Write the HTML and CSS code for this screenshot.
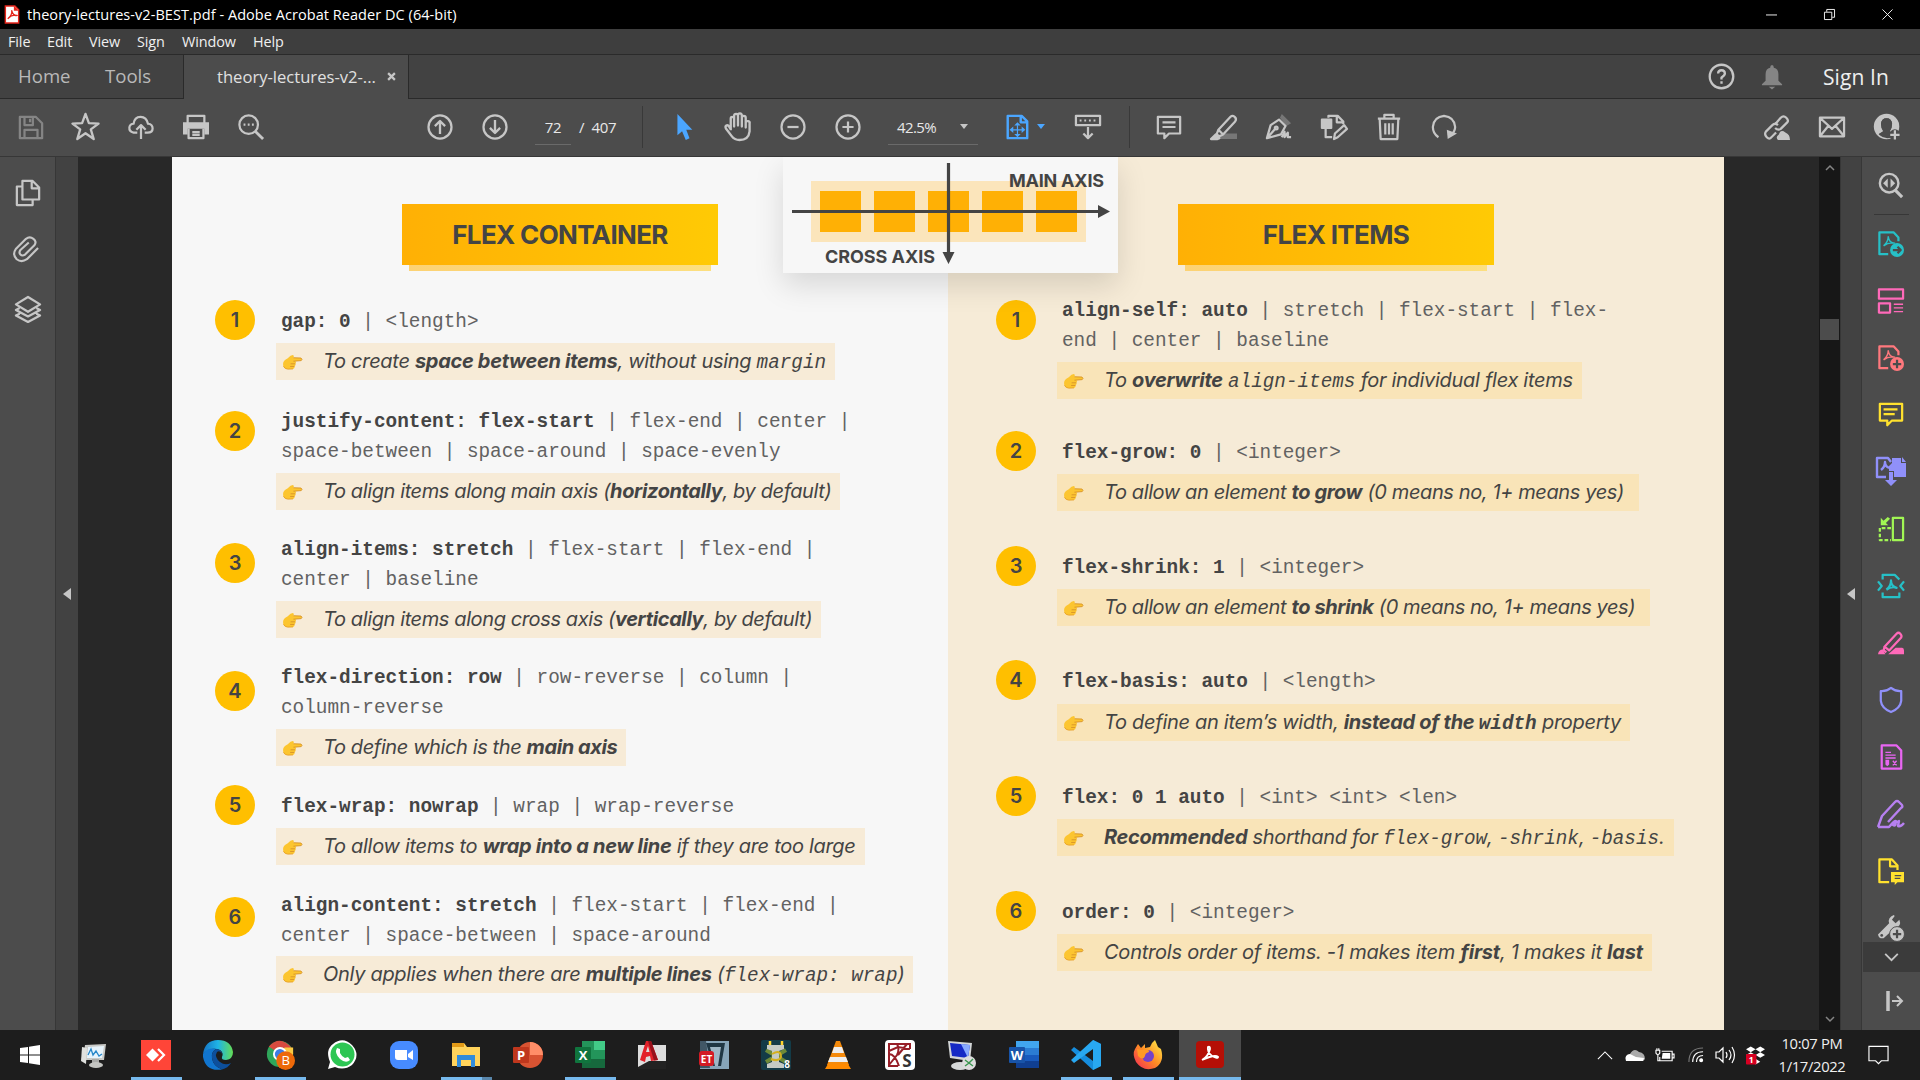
FILE: index.html
```html
<!DOCTYPE html>
<html lang="en">
<head>
<meta charset="utf-8">
<title>theory-lectures-v2-BEST.pdf - Adobe Acrobat Reader DC (64-bit)</title>
<link rel="stylesheet" href="styles.css">
</head>
<body>
<svg class="defs" width="0" height="0">
<defs>
<symbol id="hand-point" viewBox="0 0 22 18"><path d="M6 4.500Q9 1 11.500 1Q13.200 1.500 12 4L20 4.300Q22 5.600 20.200 7L14 7.600Q15.600 9 14 10.400Q15 12 13.200 13Q13.700 15.200 11.600 15.800L5 16Q1 15 1 10.500Q1 7 6 4.500Z" fill="#fcc52f"/><path d="M12 4L20 4.300Q22 5.600 20.200 7L12 7.600M9 10.400H14M8.500 13.200H13" fill="none" stroke="#d99528" stroke-width="1"/><path d="M1.500 13Q3 16 6 16L11.500 15.800" fill="none" stroke="#e8a12b" stroke-width="1"/></symbol>
</defs>
</svg>

<header class="titlebar">
  <svg class="app-icon" viewBox="0 0 16 20"><path d="M1 1H11L15 5V19H1Z" fill="#fff" stroke="#e5251b" stroke-width="1.500"/><path d="M10 1V6H15" fill="#e5251b"/><path d="M3.500 14.500C7 12 8.500 8 7.500 5.500C9 10 11 12 13 11C9 10 6 12 3.500 14.500Z" stroke="#e5251b" stroke-width="1.300" fill="none"/></svg>
  <span class="window-title">theory-lectures-v2-BEST.pdf - Adobe Acrobat Reader DC (64-bit)</span>
  <svg class="winbtn" viewBox="0 0 12 12"><path d="M0 6.500H12"/></svg>
  <svg class="winbtn" viewBox="0 0 12 12"><path d="M.5 3.500H8.500V11.500H.5ZM3 3V.5H11.500V9H9"/></svg>
  <svg class="winbtn" viewBox="0 0 12 12"><path d="M.5 .5L11.500 11.500M11.500 .5L.5 11.500"/></svg>
</header>
<nav class="menubar"><span class="m-file">File</span><span class="m-edit">Edit</span><span class="m-view">View</span><span class="m-sign">Sign</span><span class="m-window">Window</span><span>Help</span></nav>
<div class="tabbar">
  <div class="tab-main"><span class="t-home">Home</span><span>Tools</span></div>
  <div class="tab-doc"><span>theory-lectures-v2-...</span><svg viewBox="0 0 8 8"><path d="M1 1L7 7M7 1L1 7"/></svg></div>
  <div class="tab-rest">
    <svg class="ic help" viewBox="0 0 28 28"><circle cx="14" cy="14" r="12.200"/><path d="M10.500 11Q10.500 7.500 14 7.500T17.500 11Q17.500 13 14 15V17M14 19V21.500" stroke-width="2.400"/></svg>
    <svg class="bell" viewBox="0 0 24 28"><path d="M12 1Q14 1 14 4Q19 5 19 11V18L23 22V23H1V22L5 18V11Q5 5 10 4Q10 1 12 1ZM8.500 24.500H15.500L12 27.500Z" fill="#858585"/></svg>
    <span>Sign In</span>
  </div>
</div>
<div class="toolbar">
  <div class="group g1">
    <i><svg class="ic dim" viewBox="0 0 28 28"><path d="M2 3H19L26 10V26H2ZM7 3V12H16V3M13 5V9M7 26V17H21V26"/></svg></i>
    <i><svg class="ic big" viewBox="0 0 30 30"><path d="M15 2L18.500 11.500L28.500 12L20.500 18L23.500 28L15 22L6.500 28L9.500 18L1.500 12L11.500 11.500Z"/></svg></i>
    <i><svg class="ic" viewBox="0 0 28 28"><path d="M10 20H6Q1 19 1.500 14.500Q2 10.500 6 10.500Q7 3 13.500 3Q20 3 21.500 10.500Q26.500 11 26.500 15.500Q26.500 20 21 20H18M14 27V12M9 17L14 12L19 17"/></svg></i>
    <i><svg class="ic" viewBox="0 0 28 28"><path d="M5 10V2H23V10"/><path d="M0 9H28V22H23V16H5V22H0Z" fill="currentColor" stroke="none"/><path d="M6 16V26H22V16M10 19.500H18M10 22.500H18"/></svg></i>
    <i><svg class="ic" viewBox="0 0 28 28"><circle cx="11.500" cy="11.500" r="10"/><path d="M18.500 18.500L27 27" stroke-width="3"/><path d="M6 11.500H8M10.500 11.500H12.500M15 11.500H17"/></svg></i>
  </div>
  <div class="group g2">
    <i><svg class="ic" viewBox="0 0 28 28"><circle cx="14" cy="14" r="12.400"/><path d="M14 21.500V7.500M8.500 13L14 7.500L19.500 13" stroke-width="2.500"/></svg></i>
    <i><svg class="ic" viewBox="0 0 28 28"><circle cx="14" cy="14" r="12.400"/><path d="M14 6.500V20.500M8.500 15L14 20.500L19.500 15" stroke-width="2.500"/></svg></i>
  </div>
  <span class="page-now">72</span><span class="page-all">/&nbsp; 407</span>
  <div class="group g3">
    <i class="c-cursor"><svg class="ic" viewBox="0 0 28 28"><path d="M8 0L24 17L17.500 17L21 26L17 28L13 18.500L8 23Z" fill="#4ba6ff" stroke="none"/></svg></i>
    <i><svg class="ic big" viewBox="0 0 30 30"><path d="M8 19V7Q8 5 9.500 5T11.500 7V15V4Q11.500 2 13.500 2T15.500 4V14V3Q15.500 1.500 17.500 1.500T19.500 4V15V6Q19.500 4 21.500 4T23.500 6V16V11Q24 9 26 9.500T27.500 12V20Q26.500 29 17 29Q12 29 9 25L3 17Q2 15 3.500 14T6.500 15.500L8 18"/></svg></i>
    <i><svg class="ic" viewBox="0 0 28 28"><circle cx="14" cy="14" r="12.400"/><path d="M8 14H20"/></svg></i>
    <i><svg class="ic" viewBox="0 0 28 28"><circle cx="14" cy="14" r="12.400"/><path d="M8 14H20M14 8V20"/></svg></i>
  </div>
  <div class="zoom-box"><span>42.5%</span><svg viewBox="0 0 10 6"><path d="M0 0H10L5 6Z"/></svg></div>
  <div class="fit"><svg class="ic" viewBox="0 0 28 28"><path d="M4 2H19L25 8V26H4ZM18 2V9H25" stroke-width="2.600"/><path d="M14.500 9L18 12.500H11ZM14.500 25L18 21.500H11ZM6 17L10 13.500V20.500ZM23 17L19 13.500V20.500Z" fill="currentColor" stroke="none"/><path d="M14.500 12V22M9 17H20" stroke-width="1.300"/></svg><svg class="caret" viewBox="0 0 10 6"><path d="M0 0H10L5 6Z"/></svg></div>
  <i class="scroll-mode"><svg class="ic" viewBox="0 0 28 28"><path d="M1 2H27V12H1ZM14 14V26M9 21L14 26L19 21"/><path d="M5 7H7M10 7H12M15 7H17M20 7H22"/></svg></i>
  <div class="group g4">
    <i><svg class="ic" viewBox="0 0 28 28"><path d="M2 3H26V21H14L9 26V21H2ZM7 9H21M7 14H21"/></svg></i>
    <i><svg class="ic" viewBox="0 0 28 28"><path d="M13 21H28V27H6Z" fill="#777" stroke="none"/><path d="M8 17L21 3Q23 1 25.500 3T26 8L13 22ZM8 17L6 22L9 24L13 22"/><path d="M0 27L5 22L9 26L7 27Z" fill="currentColor"/></svg></i>
    <i><svg class="ic" viewBox="0 0 28 28"><path d="M15 4L17 0L27 10L22 13Z" fill="#777" stroke="none"/><path d="M1 26L5 12L14 6L21 13L16 22ZM1 26L10 16"/><circle cx="11" cy="15" r="1.500"/><path d="M17 25L20 19V25L23.500 20V25H27"/></svg></i>
    <i><svg class="ic" viewBox="0 0 28 28"><path d="M8 4V2H18L24 8V11M17 2V9H24M5 16V25H12"/><path d="M1 6H11V15H1Z" fill="currentColor"/><path d="M14 27L15 21L25 12L28 16L18 25Z"/></svg></i>
    <i><svg class="ic" viewBox="0 0 28 28"><path d="M2 5H26M9 5V1H19V5M4 6L5 27H23L24 6M10 10V22M14 10V22M18 10V22"/></svg></i>
    <i><svg class="ic" viewBox="0 0 28 28"><path d="M8 25Q2 21 2 14Q3 3 14 2Q25 3 26 14Q26 18 22 23"/><path d="M28 21L18 27L17 17Z" fill="currentColor" stroke="none"/></svg></i>
  </div>
  <div class="group g5">
    <i><svg class="ic" viewBox="0 0 28 28"><path d="M12 11L18 4Q21 1 24 4T25 9L18 16Q15 18 12 15M15 12Q12 9 9 12L2 19Q0 22 3 25T8 25L13 20"/><path d="M15 28Q12 25 16 22Q18 16 23 20Q28 22 28 28Z" fill="currentColor" stroke="none"/></svg></i>
    <i><svg class="ic" viewBox="0 0 28 28"><path d="M1 4H27V24H1ZM1 4L14 16L27 4M1 24L10 13M27 24L18 13"/></svg></i>
    <i><svg class="ic" viewBox="0 0 28 28"><circle cx="13.500" cy="13.500" r="12.500"/><path d="M4 22L10 18.500Q7.500 15 7.500 10.500Q8 4.500 13.500 4.500T19.500 10.500Q19.500 15 17 18.500L19 20V26H22L27 14Q26 1 13.500 1Q1 2 1 14Q1 18 4 22Z" fill="currentColor" stroke="none"/><path d="M10 18.500Q7.500 15 7.500 10.500Q8 4.500 13.500 4.500T19.500 10.500Q19.500 15 17 18.500L19 20V25Q12 28 5 22Z" fill="#4c4c4c" stroke="none"/><circle cx="22.500" cy="22.500" r="6" fill="#4c4c4c" stroke="none"/><path d="M22.500 17.500V27.500M17.500 22.500H27.500" stroke-width="2.400"/></svg></i>
  </div>
</div>

<main class="workspace">
  <aside class="leftrail">
    <svg class="ic" viewBox="0 0 28 28"><path d="M8 1H19L26 8V21H8ZM18 1V9H26M8 7H2V27H19V22"/></svg>
    <svg class="ic clip" viewBox="0 0 28 28"><path d="M27 13L15 25Q9 29 4 25Q-1 20 3 14L14 3Q18 0 22 3T23 10L13 20Q10 22 8 20T8 15L17 7" stroke-width="2.300"/></svg>
    <svg class="ic" viewBox="0 0 28 28"><path d="M14 1L27 9L14 17L1 9ZM5 13L1 15L14 22L27 15L23 13M5 19L1 21L14 28L27 21L23 19"/></svg>
  </aside>
  <div class="gutter"><svg viewBox="0 0 8 12"><path d="M8 0V12L0 6Z"/></svg></div>
  <div class="canvas">
    <article class="page">
      <section class="half container">
        <h1>FLEX CONTAINER</h1>
        <ol>
          <li><b class="num">1</b><code><b>gap: 0</b> | &lt;length&gt;</code><p class="loose"><svg><use href="#hand-point"/></svg>To create <b>space between items</b>, without using <tt>margin</tt></p></li>
          <li class="two"><b class="num up">2</b><code><b>justify-content: flex-start</b> | flex-end | center |<br>space-between | space-around | space-evenly</code><p><svg><use href="#hand-point"/></svg>To align items along main axis (<b>horizontally</b>, by default)</p></li>
          <li class="two"><b class="num">3</b><code><b>align-items: stretch</b> | flex-start | flex-end |<br>center | baseline</code><p><svg><use href="#hand-point"/></svg>To align items along cross axis (<b>vertically</b>, by default)</p></li>
          <li class="two"><b class="num">4</b><code><b>flex-direction: row</b> | row-reverse | column |<br>column-reverse</code><p><svg><use href="#hand-point"/></svg>To define which is the <b>main axis</b></p></li>
          <li><b class="num">5</b><code><b>flex-wrap: nowrap</b> | wrap | wrap-reverse</code><p class="loose"><svg><use href="#hand-point"/></svg>To allow items to <b>wrap into a new line</b> if they are too large</p></li>
          <li><b class="num slight">6</b><code><b>align-content: stretch</b> | flex-start | flex-end |<br>center | space-between | space-around</code><p class="loose"><svg><use href="#hand-point"/></svg>Only applies when there are <b>multiple lines</b> (<tt>flex-wrap: wrap</tt>)</p></li>
        </ol>
      </section>
      <section class="half items">
        <h1>FLEX ITEMS</h1>
        <ol>
          <li class="two"><b class="num up">1</b><code><b>align-self: auto</b> | stretch | flex-start | flex-<br>end | center | baseline</code><p class="loose"><svg><use href="#hand-point"/></svg>To <b>overwrite</b> <tt>align-items</tt> for individual flex items</p></li>
          <li><b class="num">2</b><code><b>flex-grow: 0</b> | &lt;integer&gt;</code><p class="roomy"><svg><use href="#hand-point"/></svg>To allow an element <b>to grow</b> (0 means no, 1+ means yes)</p></li>
          <li><b class="num">3</b><code><b>flex-shrink: 1</b> | &lt;integer&gt;</code><p class="roomy"><svg><use href="#hand-point"/></svg>To allow an element <b>to shrink</b> (0 means no, 1+ means yes)</p></li>
          <li class="two"><b class="num">4</b><code><b>flex-basis: auto</b> | &lt;length&gt;</code><p class="loose"><svg><use href="#hand-point"/></svg>To define an item’s width, <b>instead of the <tt>width</tt></b> property</p></li>
          <li><b class="num">5</b><code><b>flex: 0 1 auto</b> | &lt;int&gt; &lt;int&gt; &lt;len&gt;</code><p class="loose"><svg><use href="#hand-point"/></svg><b>Recommended</b> shorthand for <tt>flex-grow</tt>, <tt>-shrink</tt>, <tt>-basis</tt>.</p></li>
          <li><b class="num">6</b><code><b>order: 0</b> | &lt;integer&gt;</code><p class="looser"><svg><use href="#hand-point"/></svg>Controls order of items. -1 makes item <b>first</b>, 1 makes it <b>last</b></p></li>
        </ol>
      </section>
      <figure class="axes">
        <svg viewBox="0 0 335 116" width="335" height="116">
          <rect x="28" y="24" width="275" height="61" fill="#fbe5bb"/>
          <g fill="#ffb005"><rect x="37" y="34" width="41" height="41"/><rect x="91" y="34" width="41" height="41"/><rect x="145" y="34" width="41" height="41"/><rect x="199" y="34" width="41" height="41"/><rect x="253" y="34" width="41" height="41"/></g>
          <path d="M9 54.500H316M165.500 6V96" stroke="#444" stroke-width="3.200"/>
          <path d="M315 48V61L327 54.500ZM159.500 95H171.500L165.500 107Z" fill="#444"/>
          <text x="226" y="30" textLength="95">MAIN AXIS</text>
          <text x="42" y="106" textLength="110">CROSS AXIS</text>
        </svg>
      </figure>
    </article>
  </div>
  <div class="scrollbar">
    <svg viewBox="0 0 10 6"><path d="M1 5L5 1L9 5"/></svg>
    <div class="thumb"></div>
    <svg viewBox="0 0 10 6"><path d="M1 1L5 5L9 1"/></svg>
  </div>
  <div class="gutter right"><svg viewBox="0 0 8 12"><path d="M8 0V12L0 6Z"/></svg></div>
  <aside class="rightrail">
    <i class="first"><svg class="ic" viewBox="0 0 28 28"><circle cx="12" cy="12" r="10" stroke-width="2.600"/><path d="M18 19L26 27" stroke-width="3.400"/><path d="M10.500 7V17L5.500 12ZM13.500 7V17L18.500 12Z" fill="currentColor" stroke="none"/></svg></i>
    <i class="teal"><svg class="ic" viewBox="0 0 28 28"><path d="M11 25H1.500V1.500H17L22 7V11" /><path d="M6 16Q11 12 11 6Q12 13 18 13Q11 12 6 16" stroke-width="1.500"/><circle cx="20.500" cy="20.500" r="7.500" fill="currentColor" stroke="none"/><path d="M16 20.500H24M21 17L24.500 20.500L21 24" stroke="#4c4c4c"/></svg></i>
    <i class="pink"><svg class="ic" viewBox="0 0 28 28"><path d="M1 1.500H27V11.500H1ZM1 16.500H13V26.500H1Z"/><path d="M17 17.500H27M17 21.500H27M17 25.500H27" stroke-width="1.400"/></svg></i>
    <i class="coral"><svg class="ic" viewBox="0 0 28 28"><path d="M11 25H1.500V1.500H17L22 7V11" /><path d="M6 16Q11 12 11 6Q12 13 18 13Q11 12 6 16" stroke-width="1.500"/><circle cx="20.500" cy="20.500" r="7.500" fill="currentColor" stroke="none"/><path d="M16 20.500H25M20.500 16V25" stroke="#4c4c4c"/></svg></i>
    <i class="yellow"><svg class="ic" viewBox="0 0 28 28"><path d="M2 2H26V20H15L10 25V20H2ZM6 8H21M6 13H18"/></svg></i>
    <i class="violet"><svg class="ic wide" viewBox="0 0 30 30"><path d="M10 20H1V1H12L15 5M5 13Q9 10 9 5Q9 10 14 11"/><path d="M16 1H25V6H30V20H18V14H13V9L16 6ZM26 0L30 5H26ZM13 15H17V23H21L15 29L9 23H13Z" fill="currentColor" stroke="none"/></svg></i>
    <i class="green"><svg class="ic" viewBox="0 0 28 28"><path d="M16 2H27V26H16Z"/><path d="M14 13H2V26H14" stroke-dasharray="4 2"/><path d="M3 2V10H11L8.500 7.500L13 3L10.500 1L6 5Z" fill="currentColor" stroke="none"/></svg></i>
    <i class="teal"><svg class="ic" viewBox="0 0 28 28"><path d="M5 7V2H18L23 7M5 21V26H23V21M0 9L4 14L0 19M28 9L24 14L28 19M9 18Q14 14 14 8Q14 14 20 16Q15 14 9 18"/></svg></i>
    <i class="pink"><svg class="ic" viewBox="0 0 28 28"><path d="M7 18L20 4Q22 2 24 4T25 8L12 22ZM7 18L6 22L9 24"/><path d="M0 26Q1 21 5 21L8 26ZM11 26L19 19H26Q28 19 28 22V26Z" fill="currentColor" stroke="none"/></svg></i>
    <i class="violet"><svg class="ic" viewBox="0 0 28 28"><path d="M14 1Q19 5 25 4.500V15Q24 23 14 27Q4 23 3 15V4.500Q9 5 14 1Z"/></svg></i>
    <i class="magenta"><svg class="ic" viewBox="0 0 28 28"><path d="M4 1.500H20L25 7V26.500H4Z"/><path d="M8 9H14M8 12H19M8 15H19M16 18L20 23M20 18L16 23" stroke-width="1.500"/><path d="M8 17H12V22L10 24L8 22Z" fill="currentColor" stroke="none"/></svg></i>
    <i class="purple"><svg class="ic wide" viewBox="0 0 30 30"><path d="M2 28L6 17L19 3Q21 1 23 3L26 6Q27 8 25 9L12 23M2 28H13Q19 21 20 22Q20 28 17 26Q17 25 23 22L22 27Q25 28 28 24" /></svg></i>
    <i class="yellow"><svg class="ic" viewBox="0 0 28 28"><path d="M12 26H1.500V1.500H15L21 8V13M13 2V9H20"/><path d="M14 15H28V26H21L18 29V26H14Z" fill="currentColor" stroke="none"/><path d="M18 19H25M18 22H24" stroke="#4c4c4c" stroke-width="1.300"/></svg></i>
    <i class="wrench"><svg class="ic" viewBox="0 0 28 28"><path d="M0 21L12 9Q10 3 17 0L18 1L15 5L19 9L23 5Q26 12 18 14L6 25Q1 26 0 21Z" fill="currentColor" stroke="none"/><circle cx="4" cy="22" r="1.500" fill="#4c4c4c" stroke="none"/><circle cx="20.500" cy="20.500" r="8" fill="#c6c6c6" stroke="#4c4c4c" stroke-width="1"/><path d="M16 20.500H25M20.500 16V25" stroke="#4c4c4c"/></svg></i>
    <i class="more"><svg viewBox="0 0 16 10"><path d="M1 1L8 8L15 1"/></svg></i>
    <i class="collapse"><svg viewBox="0 0 18 20"><path d="M2 0V20" stroke-width="3.500"/><path d="M6 10H16M11 5L16 10L11 15" stroke-width="2"/></svg></i>
  </aside>
</main>

<footer class="taskbar">
  <i class="start"><svg viewBox="0 0 20 20" width="20" height="20"><path d="M0 3L8 2V9.500H0ZM9 1.800L20 0V9.500H9ZM0 10.500H8V18L0 17ZM9 10.500H20V20L9 18.200Z" fill="#fff"/></svg></i>
  <i><svg viewBox="0 0 30 30"><path d="M6 5L27 4L25 20L4 20Z" fill="#c9cac7"/><path d="M9 7L25 6L23 18L8 18Z" fill="#e7f4fc"/><path d="M9 15L12 9L14 15L17 11L20 16L23 14" fill="none" stroke="#2787c9" stroke-width="1.300"/><path d="M3 7L8 8L7 24L2 21Z" fill="#e0e1de"/><path d="M13 19H20V24H13Z" fill="#a9aaa8"/><ellipse cx="17" cy="25" rx="7" ry="3" fill="#c4c5c2"/></svg></i>
  <i class="run"><svg viewBox="0 0 30 30"><path d="M0 0H30V30H0Z" fill="#ff4538"/><path d="M11.500 8.500L18 15L11.500 21.500L5 15Z" fill="#fff"/><path d="M17 9L23 15L17 21" fill="none" stroke="#fff" stroke-width="2.200"/></svg></i>
  <i><svg viewBox="0 0 30 30"><defs><linearGradient id="edge" x1="0" y1="0.400" x2="1" y2="0.400"><stop stop-color="#1573c4"/><stop offset=".5" stop-color="#1fb4e6"/><stop offset="1" stop-color="#64dd54"/></linearGradient></defs><path d="M0 14Q2 0 15 0Q28 0 30 12Q30 19 23 20Q18 20 19 17Q21 13 17 10Q8 6 0 14Z" fill="url(#edge)"/><path d="M0 14Q5 7 13 9Q8 12 9 18Q10 26 19 29.500Q3 32 0 17Z" fill="#1175cf"/><path d="M13 9Q8 12 9 18Q10 26 19 29.500Q25 28 28 23Q22 26 17 22Q11 17 14 12Q17 10 19 14Q18 9 13 9Z" fill="#0d4f9c"/></svg></i>
  <i class="run"><svg viewBox="0 0 30 32"><circle cx="15" cy="15" r="14" fill="#2fa65a"/><path d="M15 15L3 7Q15-6 27 8Z" fill="#d84a3f"/><path d="M15 15H29V8H20ZM29 15Q28 27 15 29L20 15" fill="#fbca42"/><circle cx="15" cy="15" r="6.500" fill="#3e7de5" stroke="#fff" stroke-width="2"/><circle cx="21" cy="22" r="10" fill="#ed6909"/><text x="21" y="27" class="badge-letter" fill="#ffdfc4">B</text></svg></i>
  <i><svg viewBox="0 0 30 30"><path d="M1 29L3 22Q-2 10 6 4Q16-4 25 5Q34 15 25 25Q17 31 8 27Z" fill="#fff"/><circle cx="15.500" cy="14.500" r="12" fill="#2dc653"/><path d="M10 8L13 9L13 13Q15 17 18 18L21 17L23 20Q19 24 13 19Q7 13 10 8Z" fill="#fff"/></svg></i>
  <i><svg viewBox="0 0 30 30"><rect x="1" y="1" width="28" height="28" rx="9" fill="#478bff"/><path d="M6 10H18V20H9Q6 20 6 17ZM19 14L24 10V20L19 17Z" fill="#fff"/></svg></i>
  <i class="run stacked"><svg viewBox="0 0 30 30"><path d="M1 3H13L16 7H29V26H1Z" fill="#ffd35b"/><path d="M1 3H13V7H1Z" fill="#e29a17"/><path d="M6 27V15H24V27H20V20H10V27Z" fill="#318cdb"/></svg></i>
  <i><svg viewBox="0 0 30 30"><circle cx="17" cy="15" r="13" fill="#d85332"/><path d="M17 2A13 13 0 0 1 30 15H17Z" fill="#ff8e68"/><rect y="7" width="16" height="16" rx="1" fill="#bf371d"/><text x="8" y="20" class="letter">P</text></svg></i>
  <i class="run"><svg viewBox="0 0 30 30"><path d="M7 1H30V28H7Z" fill="#23955a"/><path d="M19 1H30V10H19Z" fill="#42cb87"/><path d="M7 19H30V28H7Z" fill="#16693d"/><rect y="7" width="16" height="16" rx="1" fill="#10753e"/><text x="8" y="20" class="letter">X</text></svg></i>
  <i><svg viewBox="0 0 30 30"><path d="M1 5H29V29H1Z" fill="#ddd"/><path d="M1 29V27L12 21H29V29Z" fill="#222"/><path d="M3 20L9 1H14L21 20L14 21L13 16L9 17L8 22Z" fill="#e32029"/><path d="M9 12L11 6L12.500 12Z" fill="#ddd"/><path d="M11 1H14L21 20L17 20.500Z" fill="#96121c"/></svg></i>
  <i><svg viewBox="0 0 30 30"><path d="M1 1H30V29H1Z" fill="#87a5b9"/><path d="M1 1H7L11 28H1Z" fill="#415766"/><path d="M7 3H26L22 26H14Z" fill="#203744"/><path d="M11 7H22L19 26H16Z" fill="#9fb7c6"/><rect y="11" width="15" height="15" rx="3" fill="#d31b25"/><text x="7.500" y="23" class="letter small">ET</text></svg></i>
  <i><svg viewBox="0 0 30 30"><rect width="30" height="30" rx="2" fill="#133b47"/><path d="M5 10L25 22M25 10L5 22" stroke="#6d8a38" stroke-width="4"/><path d="M6 5H23V9L18 11V22L23 24V28H6V24L11 22V11L6 9Z" fill="#c5cbc4"/><path d="M9 5V1M21 5V1" stroke="#ffd52c" stroke-width="2.500"/><path d="M11 14Q20 9 20 17Q18 22 10 19" fill="none" stroke="#d4b01e" stroke-width="2"/><text x="26" y="28" class="letter small">8</text></svg></i>
  <i><svg viewBox="0 0 30 30"><path d="M13 1H17L26 25H4Z" fill="#f58a0b"/><path d="M11 7H19L21 13H9ZM7 17H23L25 22H5Z" fill="#eee"/><path d="M5 24H25L28 29H2Z" fill="#ff8a00"/></svg></i>
  <i><svg viewBox="0 0 30 30"><rect width="30" height="30" rx="4" fill="#fff"/><path d="M13 26H4V4H25V9M4 11L13 7L25 9M12 4Q15 9 12 15L4 25M4 14Q10 14 14 26M13 15L22 4" fill="none" stroke="#971f28" stroke-width="2"/><text x="22" y="27" class="script-letter" fill="#333">S</text></svg></i>
  <i><svg viewBox="0 0 30 30"><path d="M1 1L25 3L23 21L3 18Z" fill="#d3d6d7"/><path d="M3 3L23 5L21 18L5 16Z" fill="#1529c5"/><path d="M14 4L23 5L21 18Z" fill="#87a9ff"/><ellipse cx="13" cy="26" rx="9" ry="4" fill="#d6d9d9"/><circle cx="22" cy="23" r="7" fill="#ddd"/><path d="M18 20L22 23L18 26M26 19L22 23L26 26" fill="none" stroke="#3a9650" stroke-width="1.400"/></svg></i>
  <i><svg viewBox="0 0 30 30"><path d="M7 1H30V28H7Z" fill="#185abd"/><path d="M7 1H30V8H7Z" fill="#41a5ee"/><path d="M7 8H30V15H7Z" fill="#2b7cd3"/><path d="M7 21H30V28H7Z" fill="#103f91"/><rect y="7" width="16" height="16" rx="1" fill="#1854a9"/><text x="8" y="20" class="letter">W</text></svg></i>
  <i class="run"><svg viewBox="0 0 30 30"><path d="M22 0L30 4V26L22 30L0 10L3 7L22 21Z" fill="#168ddd"/><path d="M22 0L30 4V26L22 30V9L3 23L0 20Z" fill="#28a8f1"/></svg></i>
  <i class="run"><svg viewBox="0 0 30 30"><defs><linearGradient id="fox" x1="1" x2="0" y2="1"><stop stop-color="#fff34c"/><stop offset=".5" stop-color="#ff8c24"/><stop offset="1" stop-color="#f32359"/></linearGradient></defs><path d="M2 9L5 4L8 8L12 4L12 8L17 7Q19 2 22 0L25 7L28 9Q32 22 22 28Q10 32 3 22Q-1 14 2 9Z" fill="url(#fox)"/><circle cx="15" cy="16" r="6" fill="#7542c9"/><path d="M9 10Q16 8 16 12Q12 13 12 16Q10 21 5 16L4 9Z" fill="#ff9a24"/></svg></i>
  <i class="run active"><svg viewBox="0 0 30 30"><rect x="1" y="1" width="28" height="27" rx="4" fill="#b50f06"/><path d="M7 20Q13 17 15 9Q15 6 13 7Q12 12 17 16Q23 19 23 17Q20 14 7 20Z" fill="none" stroke="#fff" stroke-width="1.900"/></svg></i>
  <div class="tray">
    <svg class="t-up" viewBox="0 0 18 10"><path d="M1 9L9 1L17 9"/></svg>
    <svg class="t-cloud" viewBox="0 0 20 14"><path d="M1 13Q-1 7 5 6Q9-1 14 4Q20 5 20 11L18 13Z" fill="#aaa" stroke="none"/><path d="M1 13Q-1 7 5 6L11 9L19 10L18 13Z" fill="#fff" stroke="none"/></svg>
    <svg class="t-batt" viewBox="0 0 21 15"><path d="M7 3H18V13H5V9M18 6H20V10H18M1 2H5V5Q3 8 1 5ZM2 0V2M4 0V2M3 7V13H5"/><path d="M8 5H16V11H7Z" fill="#fff" stroke="none"/></svg>
    <svg class="t-wifi" viewBox="0 0 17 17"><path d="M1 16Q1 1 16 1" stroke="#777"/><path d="M5 16Q5 5 16 5M9 16Q9 9 16 9"/><circle cx="14" cy="14" r="1.500" fill="#fff"/></svg>
    <svg class="t-vol" viewBox="0 0 21 18"><path d="M1 6H4L8 2V16L4 12H1ZM11 6Q13 9 11 12M14 4Q18 9 14 14M17 1Q22 9 17 17"/></svg>
    <svg class="t-drop" viewBox="0 0 20 20"><path d="M5 1L10 4L15 1L20 4L15 7L20 10L15 13L10 10L5 13L0 10L5 7L0 4ZM10 14L15 17L10 20Z" fill="#fff" stroke="none"/><path d="M10 4L15 7L10 10L5 7Z" fill="#1d1d1d" stroke="none"/><rect y="9" width="11" height="11" rx="1" fill="#d70022" stroke="none"/><text x="5.500" y="18" class="tray-badge">1</text></svg>
    <div class="clock"><span>10:07 PM</span><span>1/17/2022</span></div>
    <svg class="t-note" viewBox="0 0 22 20"><path d="M1 1H21V16H14L11 19L8 16H1Z"/></svg>
  </div>
</footer>
</body>
</html>
```
FILE: styles.css
```css
* { box-sizing: border-box; }
body { margin: 0; width: 1920px; height: 1080px; overflow: hidden; display: flex; flex-direction: column; background: #282828; color: #f0f0f0; font-family: "Open Sans", "Noto Sans", sans-serif; }
svg { display: block; flex: none; overflow: visible; }
i { display: flex; align-items: center; justify-content: center; flex: none; font-style: normal; }
.defs { width: 0; height: 0; flex: none; align-self: flex-start; }
.ic { width: 26px; height: 26px; fill: none; stroke: currentColor; stroke-width: 2.4; stroke-linejoin: round; }
.ic.big { width: 29px; height: 29px; }
.dim { color: #858585; }

.titlebar { height: 29px; flex: none; background: #000; display: flex; align-items: center; padding-left: 4px; font-size: 14.5px; }
.app-icon { width: 16px; height: 19px; }
.window-title { flex: 1; margin-left: 7px; color: #fff; letter-spacing: .05px; }
.winbtn { width: 11px; height: 11px; margin-right: 47px; fill: none; stroke: #fff; }
.winbtn:last-child { margin-right: 27px; }
.menubar { height: 26px; flex: none; background: #3e3e3e; border-bottom: 1px solid #2a2a2a; display: flex; align-items: center; padding-left: 8px; font-size: 14.4px; letter-spacing: -.1px; }
.m-file { width: 39px; }
.m-edit { width: 42px; }
.m-view { width: 48px; }
.m-sign { width: 45px; }
.m-window { width: 71px; }
.tabbar { height: 44px; flex: none; display: flex; font-size: 18.6px; color: #b9b9b9; background: #4c4c4c; }
.tab-main { width: 184px; background: #424242; border-right: 1px solid #2a2a2a; border-bottom: 1px solid #2a2a2a; display: flex; align-items: center; padding: 0 0 2px 18px; }
.t-home { width: 87px; }
.tab-doc { width: 225px; display: flex; align-items: center; padding-left: 33px; color: #e0e0e0; font-size: 16.6px; border-right: 1px solid #2a2a2a; padding-bottom: 1px; }
.tab-doc span { width: 170px; }
.tab-doc svg { width: 9px; height: 9px; stroke: #c6c6c6; stroke-width: 2; }
.tab-rest { flex: 1; background: #424242; border-bottom: 1px solid #2a2a2a; display: flex; align-items: center; justify-content: flex-end; padding-right: 31px; font-size: 21px; letter-spacing: .1px; color: #eee; }
.help { color: #c6c6c6; width: 27px; height: 27px; margin-right: 26px; }
.bell { width: 22px; height: 26px; margin-right: 40px; }

.toolbar { height: 58px; flex: none; background: #4c4c4c; border-bottom: 1px solid #373737; display: flex; align-items: center; color: #c6c6c6; padding-bottom: 2px; }
.group { display: flex; }
.group i { width: 55px; }
.g1 { margin-left: 3px; }
.g2 { margin-left: 134px; }
.page-now { width: 36px; height: 36px; line-height: 36px; text-align: center; color: #e8e8e8; border-bottom: 1px solid #6a6a6a; font-size: 15px; letter-spacing: -.3px; margin-left: 13px; }
.page-all { width: 72px; height: 42px; line-height: 43px; font-size: 15px; letter-spacing: -.3px; padding-left: 8px; color: #e8e8e8; border-right: 1px solid #393939; }
.g3 { margin-left: 12px; }
.zoom-box { width: 90px; height: 37px; margin-left: 13px; border-bottom: 1px solid #6a6a6a; display: flex; align-items: center; justify-content: space-between; padding: 1px 10px 0 9px; font-size: 15px; letter-spacing: -.6px; color: #e8e8e8; }
.zoom-box svg { width: 8px; height: 5px; fill: #c6c6c6; }
.fit { display: flex; align-items: center; margin-left: 26px; gap: 7px; color: #4ba6ff; }
.caret { width: 8px; height: 5px; fill: #4ba6ff; }
.scroll-mode { width: 85px; height: 42px; border-right: 1px solid #393939; padding-left: 1px; }
.g4 { margin-left: 11px; }
.g5 { margin-left: auto; padding-right: 6px; }

.workspace { flex: 1; min-height: 0; display: flex; }
.leftrail { width: 55px; background: #4c4c4c; color: #c6c6c6; display: flex; flex-direction: column; align-items: center; padding-top: 23px; gap: 32px; }
.leftrail .clip { margin: -2px 4px 2px 0; }
.gutter { width: 23px; background: #424242; border-left: 1px solid #373737; display: flex; align-items: center; justify-content: center; }
.gutter svg { width: 8px; height: 12px; fill: #c6c6c6; }
.gutter.right { width: 22px; border-right: 1px solid #373737; }
.canvas { width: 1741px; background: #282828; padding-left: 94px; overflow: hidden; }
.page { position: relative; width: 1552px; height: 873px; display: flex; color: #444; font-family: Inter, sans-serif; }
.half { width: 776px; padding-top: 47px; background: #f7f7f7; }
.half.items { background: #f6ebd7; }
.half h1 { position: relative; width: 316px; height: 61px; margin: 0 auto; background: linear-gradient(90deg, #ffb005, #ffca05); font-size: 26px; font-weight: 700; line-height: 62px; text-align: center; letter-spacing: -.65px; }
.half h1::after { content: ""; position: absolute; left: 7px; right: 7px; top: 61px; height: 6px; background: linear-gradient(90deg, #fcd274, #fcdf80); }
ol { list-style: none; margin: 40px 0 0 43px; padding: 0; display: grid; grid-template-rows: 100px 128px 128px 129px 99px 103px; }
.items ol { margin: 29px 0 0 48px; grid-template-rows: 142px 115px 114px 116px 115px 103px; }
li { display: grid; grid-template-columns: 40px 1fr; grid-template-rows: auto 37px; row-gap: 8px; column-gap: 21px; align-content: start; }
.two { row-gap: 9px; }
.num { width: 40px; height: 40px; margin: -10px 0; align-self: center; border-radius: 50%; background: #ffbf00; text-align: center; font-size: 20px; line-height: 40px; font-weight: 600; }
.num.up { transform: translateY(-4px); }
.num.slight { transform: translateY(-2px); }
code { margin: 0 0 -3px 5px; padding-top: 3px; font-family: "Liberation Mono", monospace; font-size: 19.38px; line-height: 29.5px; white-space: pre; color: #626262; }
code b { font-weight: 700; color: #444; }
p { grid-column: 2; justify-self: start; height: 37px; margin: 0; padding: 0 9px 0 6px; background: #f7ebd7; display: block; line-height: 36px; font-size: 20px; letter-spacing: -.39px; font-style: italic; white-space: pre; }
p.loose { letter-spacing: -.3px; }
p.looser { letter-spacing: -.23px; }
.items p { background: #f9e4b8; }
.items p.roomy { padding-right: 15px; }
p svg { display: inline-block; width: 21px; height: 17px; margin-right: 20px; vertical-align: -3px; }
p b { font-weight: 700; }
tt { font-family: "Liberation Mono", monospace; font-size: 19.3px; line-height: 20px; letter-spacing: 0; }
.axes { position: absolute; left: 611px; top: 0; margin: 0; background: #f7f7f7; box-shadow: 0 12px 28px rgba(0,0,0,.13); }
.axes text { font-family: Inter, sans-serif; font-size: 18px; font-weight: 700; fill: #444; }

.scrollbar { width: 21px; background: #171717; display: flex; flex-direction: column; align-items: center; padding: 8px 0; }
.scrollbar svg { width: 10px; height: 6px; fill: none; stroke: #858585; stroke-width: 1.5; }
.thumb { width: 19px; height: 21px; background: #4c4c4c; margin: 148px 0 auto; }
.rightrail { width: 58px; background: #4c4c4c; color: #c6c6c6; display: flex; flex-direction: column; align-items: center; }
.rightrail i { width: 57px; height: 57px; }
.rightrail .wide { width: 30px; height: 30px; }
.rightrail .first { width: 35px; height: 58px; border-bottom: 1px solid #373737; padding-bottom: 2px; }
.teal { color: #26c0c7; }
.pink { color: #ff69b9; }
.coral { color: #ff787d; }
.yellow { color: #ffe12e; }
.violet { color: #9090fa; }
.green { color: #a1f654; }
.magenta { color: #e866f2; }
.purple { color: #b780f1; }
.rightrail .more { height: 30px; margin-top: -14px; background: #3b3b3b; position: relative; }
.more svg, .collapse svg { fill: none; stroke: #c6c6c6; stroke-width: 2; }
.more svg { width: 15px; height: 9px; }
.collapse svg { width: 18px; height: 20px; margin-left: 8px; }

.taskbar { height: 50px; flex: none; background: #1d1d1d; display: flex; }
.taskbar i { width: 62px; height: 50px; position: relative; }
.taskbar i.start { width: 63px; padding-right: 3px; }
.taskbar i svg { width: 30px; height: 30px; }
.taskbar .start svg { width: 20px; height: 20px; }
.taskbar .run::after { content: ""; position: absolute; bottom: 0; left: 6px; width: 51px; height: 3px; background: #76b9ed; }
.taskbar .stacked::after { background: linear-gradient(90deg, #76b9ed 80%, #5986aa 80%); }
.taskbar .active { background: #4a4a4a; }
.taskbar .active::after { left: 0; width: 62px; }
.letter, .badge-letter, .script-letter, .tray-badge { font-family: "Open Sans", sans-serif; font-weight: 700; font-size: 13px; text-anchor: middle; fill: #fff; }
.letter.small { font-size: 10px; }
.badge-letter { font-size: 14px; font-weight: 400; }
.script-letter { font-size: 17px; fill: #333; }
.tray { margin-left: auto; display: flex; align-items: center; padding-right: 31px; }
.tray svg { fill: none; stroke: #fff; stroke-width: 1.2; }
.t-up { width: 16px; height: 9px; margin-right: 12px; }
.t-cloud { width: 20px; height: 14px; margin-right: 10px; }
.t-batt { width: 20px; height: 15px; margin-right: 13px; }
.t-wifi { width: 16px; height: 16px; margin-right: 11px; }
.t-vol { width: 21px; height: 18px; margin-right: 10px; }
.t-drop { width: 19px; height: 20px; margin-right: 12px; }
.tray .tray-badge { font-size: 9px; fill: #fff; stroke: none; }
.clock { width: 70px; font-size: 14.8px; letter-spacing: -.35px; line-height: 23px; display: flex; flex-direction: column; align-items: center; margin-right: 21px; white-space: nowrap; }
.t-note { width: 21px; height: 20px; }
```
